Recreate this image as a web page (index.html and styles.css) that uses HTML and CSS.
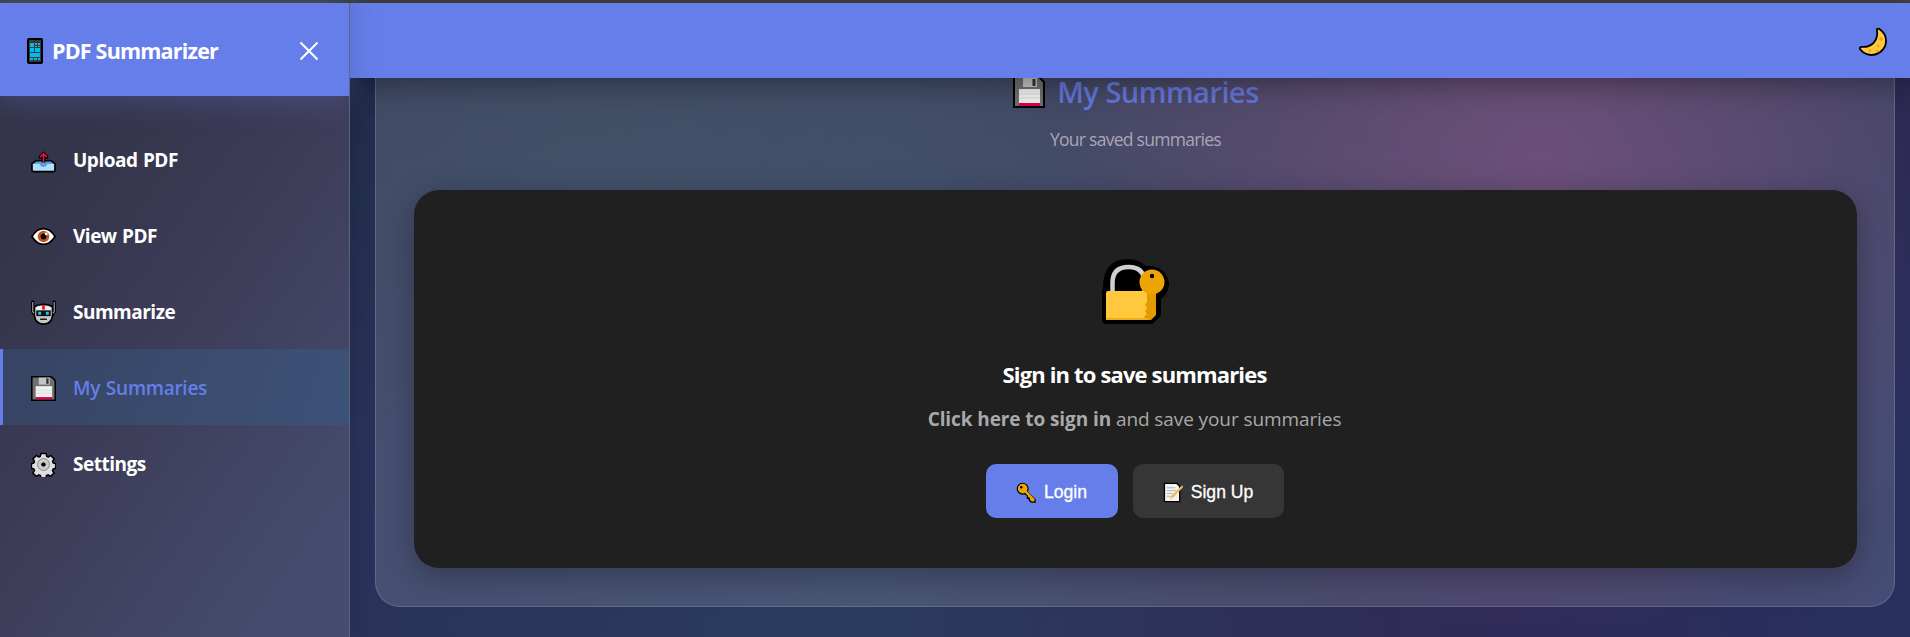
FILE: index.html
```html
<!DOCTYPE html>
<html lang="en">

<head>
    <meta charset="UTF-8">
    <meta name="viewport" content="width=device-width, initial-scale=1.0">
    <title>PDF Summarizer</title>
    <link rel="stylesheet" href="styles.css">
</head>

<body>
    <!-- shared emoji icons -->
    <svg class="sprite" width="0" height="0">
        <symbol id="floppy" viewBox="0 0 32 32">
            <path d="M1 1h25l5 5v25H1z" fill="#6f6f6f" stroke="#000" stroke-width="2" />
            <path d="M10 2h14v9H10z" fill="#c4c4c4" />
            <path d="M19.500 3h3v7h-3z" fill="#333" />
            <path d="M6 13h21v15H6z" fill="#f0f0f0" />
            <path d="M6 18h21M6 22h21" stroke="#dadada" />
            <path d="M6 27h21v3H6z" fill="#d9004c" />
        </symbol>
    </svg>

    <div class="topline"></div>
    <div class="app">
        <aside class="sidebar">
            <div class="sidebar-header">
                <svg class="logo-icon" viewBox="0 0 16 26">
                    <rect x="1" y="1" width="14" height="24" rx="1" fill="#3a3a3a" stroke="#000" stroke-width="2" />
                    <path d="M3 5h4v4H3zM8 5h2v2H8zM11 5h2v2h-2zM8 8h2v1H8zM11 8h2v1h-2zM3 10h4v4H3zM8 10h5v4H8zM3 15h10v4H3zM3 20h3v2H3zM7 20h3v2H7zM11 20h2v2h-2z" fill="#00bcf2" />
                </svg>
                <h2>PDF Summarizer</h2>
                <svg class="close" viewBox="0 0 20 20">
                    <path d="M1.500 1.500l17 17M18.500 1.500l-17 17" stroke="#fff" stroke-width="2" />
                </svg>
            </div>
            <ul class="nav">
                <li>
                    <svg viewBox="0 0 26 26">
                        <path d="M5 13.500h16l4 3v6.500q0 1.500-1.500 1.500h-21Q1 24.500 1 23v-6.500z" fill="#b4dcf8" stroke="#000" stroke-width="1.800" />
                        <path d="M6 14.200h14l3.500 2.500h-6.500q-1 3-4 3t-4-3H2.500z" fill="#4aa3e8" />
                        <path d="M13 3.500l5 5v2.800h-3V15h-4v-3.700H8V8.500z" fill="#000" />
                        <path d="M13 15.500V6M9.500 9.500L13 6 16.500 9.500" fill="none" stroke="#e81136" stroke-width="1.700" />
                    </svg>
                    <span>Upload PDF</span>
                </li>
                <li>
                    <svg viewBox="0 0 26 26">
                        <path d="M1 13Q6 4.800 13 4.800T25 13Q20 21.200 13 21.200T1 13z" fill="#fff" stroke="#000" stroke-width="1.800" />
                        <circle cx="13" cy="13" r="6" fill="#c2571f" />
                        <circle cx="13" cy="13" r="3" fill="#000" />
                        <circle cx="15.800" cy="10.300" r="1.500" fill="#fff" />
                    </svg>
                    <span>View PDF</span>
                </li>
                <li>
                    <svg viewBox="0 0 26 26">
                        <path d="M1.800 2v10l2 3M24.200 2v10l-2 3" fill="none" stroke="#000" stroke-width="3.400" stroke-linecap="round" />
                        <path d="M3.500 7Q7 4.500 13 4.500T22.500 7v9q-1 9-9.500 9t-9.500-9z" fill="#c9c9c9" stroke="#000" stroke-width="1.800" />
                        <path d="M1.800 2v10l1.500 2M24.200 2v10l-1.500 2" fill="none" stroke="#9a9a9a" stroke-width="1.300" />
                        <path d="M5.500 7.500q7.500-3 15 0v3h-15z" fill="#eee" />
                        <path d="M11.500 5.400h3V10h-3z" fill="#e8222f" />
                        <path d="M5.500 10.800h15v6h-15z" fill="#111" />
                        <path d="M7.500 12.300h3v3h-3zM15.500 12.300h3v3h-3z" fill="#25c4ee" />
                        <path d="M9.500 20h7" stroke="#111" stroke-width="1.500" />
                    </svg>
                    <span>Summarize</span>
                </li>
                <li class="current">
                    <svg viewBox="0 0 32 32"><use href="#floppy" /></svg>
                    <span>My Summaries</span>
                </li>
                <li>
                    <svg viewBox="0 0 26 26">
                        <path d="M10.300 1.500h5.400l.7 3 1.500.7 2.700-1.600 3.500 3.700-1.700 2.600.7 1.600 2.600.7v4.600l-2.600.8-.7 1.700 1.600 2.600-3.600 3.500-2.600-1.600-1.600.7-.8 2.500h-4.800l-.9-2.600-1.600-.6-2.500 1.600-3.600-3.600 1.600-2.600-.6-1.600-2.600-.7v-4.800l2.600-.6.6-1.600L2 7.300l3.600-3.700 2.500 1.600 1.600-.7z" fill="#dedede" stroke="#000" stroke-width="1.600" stroke-linejoin="round" />
                        <circle cx="13" cy="13" r="6.200" fill="#c8c8c8" stroke="#8d8d8d" stroke-width="1" />
                        <circle cx="13" cy="13" r="4" fill="#b5b5b5" stroke="#e2e2e2" stroke-width=".8" />
                        <circle cx="13" cy="13" r="2.200" fill="#000" />
                    </svg>
                    <span>Settings</span>
                </li>
            </ul>
        </aside>

        <div class="main">
            <header class="header">
                <svg class="moon" viewBox="0 0 28 28">
                    <path d="M18 1q1.500-1 3 .5Q27 5.500 27 13q0 6-4.500 10T12 27Q5 26.500 1 21q-.5-2 1.500-2.200Q10 19.500 14.500 15 19 10 18 3z" fill="#ffc83d" stroke="#000" stroke-width="1.800" stroke-linejoin="round" />
                    <circle cx="22" cy="11" r="1.700" fill="#f0a020" />
                    <circle cx="19" cy="18" r="1.200" fill="#f0a020" />
                    <circle cx="11" cy="22.500" r="1.200" fill="#f0a020" />
                    <circle cx="18" cy="23" r="1.300" fill="#f0a020" />
                </svg>
            </header>
            <div class="content">
                <section class="panel">
                    <h1>
                        <svg viewBox="0 0 32 32"><use href="#floppy" /></svg>
                        <span>My Summaries</span>
                    </h1>
                    <p class="sub">Your saved summaries</p>
                    <div class="card">
                        <svg class="lock" viewBox="0 0 68 68">
                            <path d="M6 34V26Q8 5 27 5q10 0 16 7 19-1 21 14 0 8-8 13v17l-6 6H5V34z" fill="#000" stroke="#000" stroke-width="8" stroke-linejoin="round" />
                            <path d="M11.500 34V25q0-16 16-16t16 16v9" fill="none" stroke="#d0d0d0" stroke-width="4.500" />
                            <rect x="5" y="33" width="45" height="29" rx="2" fill="#ffc83d" />
                            <path d="M46 33h9v24l-5 5h-5l-2-3 3-3-2-3 2-3-2-3 2-3z" fill="#e19b00" />
                            <path d="M5 60h42v2H5z" fill="#efad18" />
                            <circle cx="51" cy="24" r="12.500" fill="#eba400" />
                            <circle cx="51" cy="18" r="2.200" fill="#000" />
                        </svg>
                        <h3>Sign in to save summaries</h3>
                        <p class="hint"><strong>Click here to sign in</strong> and save your summaries</p>
                        <div class="btns">
                            <button class="btn login">
                                <svg viewBox="0 0 22 22">
                                    <path d="M11 10l9 8.500V21h-4l-2-2v-2h-2v-2.500L9 12z" fill="#eba400" stroke="#000" stroke-width="1.400" />
                                    <circle cx="7" cy="7" r="5.700" fill="#eba400" stroke="#000" stroke-width="1.200" />
                                    <path d="M10 10l9 9" stroke="#eba400" stroke-width="2.500" />
                                    <circle cx="5.500" cy="5.500" r="1.300" fill="#000" />
                                </svg>
                                <span>Login</span>
                            </button>
                            <button class="btn signup">
                                <svg viewBox="0 0 22 22">
                                    <path d="M1.500 1.500h13l3 3v16h-16z" fill="#f2f2f2" stroke="#000" stroke-width="1.400" />
                                    <path d="M4 6h9M4 9h10M4 12h6M4 15h5" stroke="#aeb4bd" stroke-width="1" />
                                    <path d="M7 18l2-4L19.500 4 21 5.500 11 16z" fill="#f4bd55" />
                                    <path d="M19 4.500L20 3.500l1.300 1.300-1 1z" fill="#e87a6a" />
                                </svg>
                                <span>Sign Up</span>
                            </button>
                        </div>
                    </div>
                </section>
            </div>
        </div>
    </div>
</body>

</html>
```
FILE: styles.css
```css
body,
ul,
li,
h1,
h2,
h3,
p {
    margin: 0;
    padding: 0;
    list-style: none;
}

* {
    box-sizing: border-box;
}

body {
    height: 637px;
    overflow: hidden;
    font-family: "Open Sans", "Noto Sans", sans-serif;
    color: #fff;
    background: #202848;
}

svg {
    display: block;
    flex: none;
}

.sprite {
    position: absolute;
}

.topline {
    height: 3px;
    background: #434545;
}

.app {
    display: flex;
    height: 634px;
}

/* sidebar */
.sidebar {
    width: 350px;
    flex: none;
    border-right: 1px solid #5b627b;
    background: linear-gradient(125deg, #34344a 22%, #3d3c58 50%, #464c6e 90%);
    box-shadow: 4px 0 20px rgba(0, 0, 0, 0.12);
    z-index: 2;
}

.sidebar-header {
    display: flex;
    align-items: center;
    height: 93px;
    padding: 2px 30px 0 27px;
    background: #667eea;
    box-shadow: 0 4px 30px rgba(102, 126, 234, 0.3);
}

.logo-icon {
    width: 16px;
    height: 26px;
    margin-right: 9px;
}

.sidebar-header h2 {
    flex: 1;
    font-size: 21.500px;
    font-weight: 700;
    line-height: 30px;
    letter-spacing: -0.800px;
}

.close {
    width: 20px;
    height: 20px;
}

.nav {
    padding-top: 25px;
}

.nav li {
    display: flex;
    align-items: center;
    height: 76px;
    padding: 2px 0 0 28px;
    border-left: 3px solid transparent;
    font-size: 19px;
    font-weight: 700;
    letter-spacing: -0.500px;
    word-spacing: 1px;
}

.nav li svg {
    width: 25px;
    height: 25px;
    margin-right: 17px;
}

.nav li.current {
    color: #667eea;
    font-weight: 600;
    letter-spacing: -0.250px;
    border-left-color: #667eea;
    background: linear-gradient(110deg, #374463, #3d5278);
}

/* main area */
.main {
    flex: 1;
    display: flex;
    flex-direction: column;
    background:
        radial-gradient(circle 480px at 1190px 155px, rgba(130, 65, 125, 0.500), transparent),
        radial-gradient(ellipse 480px 300px at 250px 150px, rgba(35, 70, 85, 0.300), transparent),
        linear-gradient(180deg, rgba(16, 20, 38, 0.350) 10%, rgba(16, 20, 38, 0) 70%),
        linear-gradient(95deg, #29325a 0%, #2b3c60 35%, #2e3058 58%, #302b58 75%, #27305f 100%);
}

.header {
    display: flex;
    align-items: center;
    justify-content: flex-end;
    height: 75px;
    flex: none;
    padding: 3px 23px 0 0;
    background: #667eea;
    box-shadow: 0 4px 30px rgba(0, 0, 0, 0.400);
    z-index: 1;
}

.moon {
    width: 28px;
    height: 28px;
}

.content {
    padding: 0 15px 0 25px;
}

.panel {
    display: flow-root;
    height: 529px;
    padding: 0 37px 0 38px;
    border: 1px solid rgba(255, 255, 255, 0.150);
    border-top: 0;
    border-radius: 0 0 25px 25px;
    background: rgba(255, 255, 255, 0.140);
    text-align: center;
}

.panel h1 {
    display: flex;
    justify-content: center;
    align-items: center;
    height: 30px;
    margin-top: -1px;
    padding-left: 1px;
    color: #6275d8;
    font-size: 29px;
    font-weight: 600;
    line-height: 38px;
    letter-spacing: -0.500px;
}

.panel h1 svg {
    width: 32px;
    height: 32px;
    margin-right: 12px;
}

.sub {
    height: 83px;
    padding-top: 20px;
    color: #aaa6b3;
    font-size: 17.500px;
    line-height: 24px;
    letter-spacing: -0.730px;
}

.card {
    display: flex;
    flex-direction: column;
    align-items: center;
    height: 378px;
    padding: 68px 2px 0 0;
    border-radius: 25px;
    background: #202021;
    box-shadow: 0 8px 32px rgba(0, 0, 0, 0.300);
}

.lock {
    width: 68px;
    height: 68px;
}

.card h3 {
    margin-top: 33px;
    font-size: 22px;
    font-weight: 700;
    line-height: 30px;
    letter-spacing: -0.850px;
}

.hint {
    margin-top: 15px;
    color: #a9a9a9;
    font-size: 19px;
    line-height: 30px;
    letter-spacing: -0.090px;
}

.btns {
    display: flex;
    gap: 15px;
    margin-top: 30px;
}

.btn {
    display: flex;
    align-items: center;
    justify-content: center;
    width: 132px;
    height: 54px;
    padding: 2px 0 0;
    border: 0;
    border-radius: 10px;
    color: #fff;
    background: #667eea;
    font-family: "Liberation Sans", sans-serif;
    font-size: 17.600px;
    -webkit-text-stroke: 0.3px #fff;
    cursor: pointer;
}

.btn svg {
    width: 21px;
    height: 21px;
    margin-right: 7px;
}

.signup {
    width: 151px;
    background: #363636;
}
```
